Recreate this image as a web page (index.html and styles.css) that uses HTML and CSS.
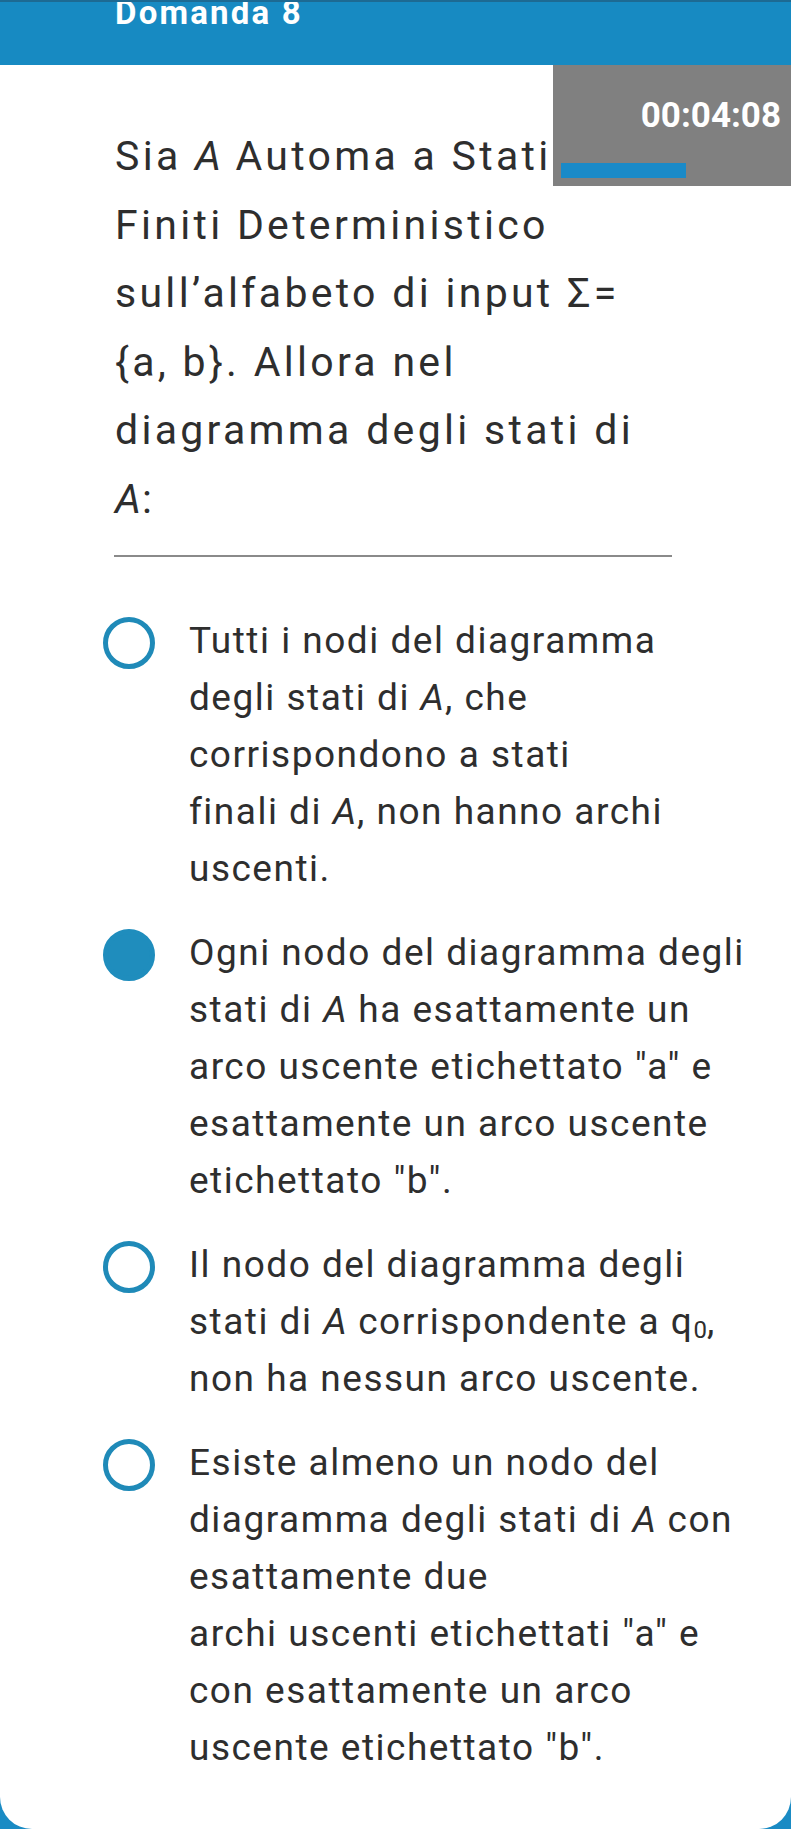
FILE: index.html
```html
<!DOCTYPE html>
<html lang="it">
<head>
<meta charset="utf-8">
<title>Domanda 8</title>
<link rel="stylesheet" href="styles.css">
</head>
<body>
<header class="topbar">
  <h1 class="title">Domanda 8</h1>
</header>
<main class="card">
  <aside class="timer">
    <div class="time">00:04:08</div>
    <div class="progress"><div class="progress-bar"></div></div>
  </aside>
  <div class="question">Sia <i>A</i> Automa a Stati Finiti Deterministico sull’alfabeto di input Σ= {a, b}. Allora nel diagramma degli stati di <i>A</i>:</div>
  <hr class="sep">
  <ul class="options">
    <li class="option">
      <span class="radio"></span>
      <div class="label">Tutti i nodi del diagramma degli stati di <i>A</i>, che corrispondono a stati<br>finali di <i>A</i>, non hanno archi uscenti.</div>
    </li>
    <li class="option">
      <span class="radio checked"></span>
      <div class="label">Ogni nodo del diagramma degli stati di <i>A</i> ha esattamente un arco uscente etichettato "a" e esattamente un arco uscente etichettato "b".</div>
    </li>
    <li class="option">
      <span class="radio"></span>
      <div class="label">Il nodo del diagramma degli stati di <i>A</i> corrispondente a q<sub>0</sub>, non ha nessun arco uscente.</div>
    </li>
    <li class="option">
      <span class="radio"></span>
      <div class="label">Esiste almeno un nodo del diagramma degli stati di <i>A</i> con esattamente due<br>archi uscenti etichettati "a" e con esattamente un arco uscente etichettato "b".</div>
    </li>
  </ul>
</main>
</body>
</html>
```

FILE: styles.css
```css
html, body {
  margin: 0;
  padding: 0;
}
body {
  width: 791px;
  height: 1829px;
  overflow: hidden;
  background: #1a8bc4;
  font-family: Roboto, "Liberation Sans", sans-serif;
  color: #2e2e2e;
}
.topbar {
  height: 63px;
  border-top: 2px solid #1d6a93;
  background: #178ac2;
  overflow: hidden;
}
.title {
  margin: 0;
  padding-left: 115px;
  font-size: 33px;
  line-height: 33px;
  font-weight: 700;
  letter-spacing: 2.2px;
  color: #ffffff;
  margin-top: -6px;
}
.card {
  position: relative;
  background: #ffffff;
  height: 1764px;
  border-radius: 0 0 32px 32px;
  box-sizing: border-box;
  padding: 57px 31px 0 103px;
}
.timer {
  position: absolute;
  top: 0;
  right: 0;
  width: 238px;
  height: 121px;
  background: #808080;
  box-sizing: border-box;
  padding: 31px 10px 0 8px;
  display: flex;
  flex-direction: column;
}
.time {
  align-self: flex-end;
  font-size: 35px;
  line-height: 40px;
  font-weight: 700;
  color: #ffffff;
}
.progress {
  margin-top: 27px;
  width: 125px;
  height: 15px;
}
.progress-bar {
  width: 100%;
  height: 100%;
  background: #1a8ac8;
}
.question {
  padding-left: 12px;
  width: 545px;
  font-size: 41px;
  line-height: 68.5px;
  letter-spacing: 3.3px;
}
.question i, .label i {
  letter-spacing: 1px;
}
.sep {
  margin: 22px 0 0 11px;
  width: 558px;
  height: 2px;
  border: 0;
  background: #8a8a8a;
}
.options {
  list-style: none;
  margin: 55px 0 0 0;
  padding: 0;
  display: flex;
  flex-direction: column;
  gap: 27px;
}
.option {
  display: flex;
  align-items: flex-start;
  gap: 34px;
}
.radio {
  flex: none;
  width: 52px;
  height: 52px;
  margin-top: 5px;
  box-sizing: border-box;
  border: 5px solid #1f8ab8;
  border-radius: 50%;
}
.radio.checked {
  border-color: #1f8dbd;
  background: #1f8dbd;
}
.label {
  flex: none;
  width: 559px;
  font-size: 37px;
  line-height: 57px;
  letter-spacing: 1.5px;
}
.label sub {
  font-size: 24px;
  line-height: 0;
  vertical-align: -4px;
  letter-spacing: 0;
}
```
